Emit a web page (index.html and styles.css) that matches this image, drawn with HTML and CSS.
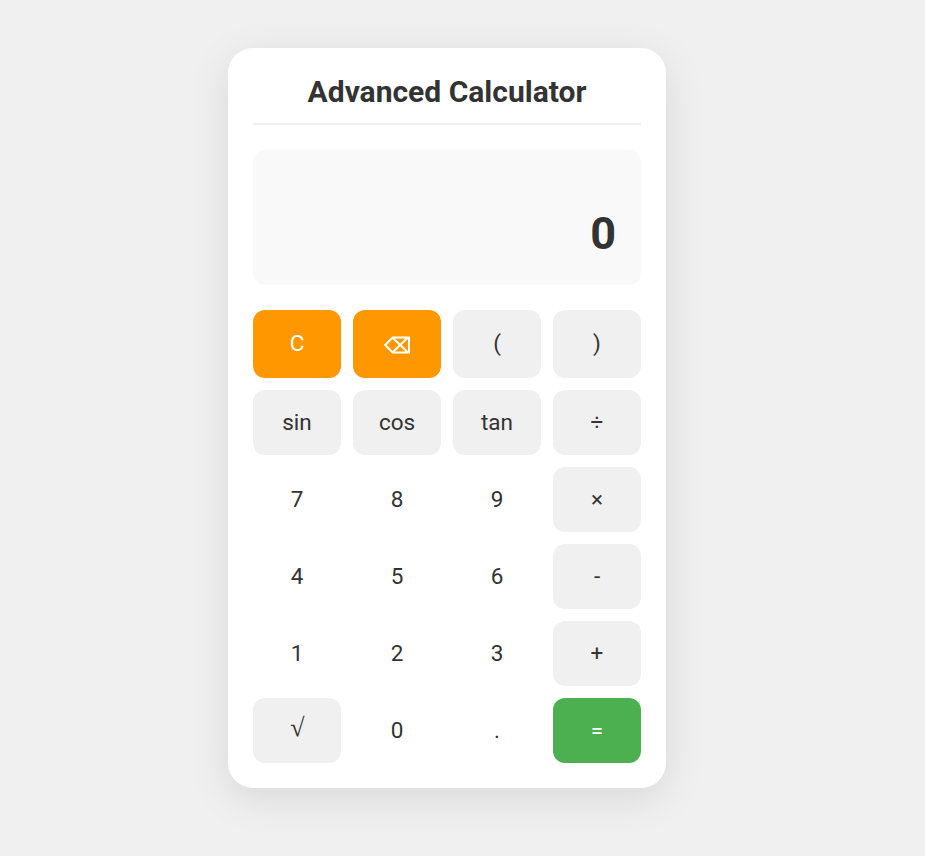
FILE: index.html
```html
<!DOCTYPE html>
<html lang="en">
<head>
<meta charset="UTF-8">
<title>Advanced Calculator</title>
<link rel="stylesheet" href="styles.css">
</head>
<body>
<main class="calculator">
  <h1 class="title">Advanced Calculator</h1>
  <div class="display"><div class="history"></div><div class="result">0</div></div>
  <div class="keys">
    <button class="key clear">C</button>
    <button class="key clear" aria-label="Backspace"><svg class="backspace" viewBox="0 0 26 18" width="26" height="18"><path d="M1.2 9 8.6 1.5H25V16.5H8.6ZM8.6 1.7 23.5 16M8.6 16.3 23.5 2"/></svg></button>
    <button class="key op">(</button>
    <button class="key op">)</button>
    <button class="key op">sin</button>
    <button class="key op">cos</button>
    <button class="key op">tan</button>
    <button class="key op">÷</button>
    <button class="key">7</button>
    <button class="key">8</button>
    <button class="key">9</button>
    <button class="key op">×</button>
    <button class="key">4</button>
    <button class="key">5</button>
    <button class="key">6</button>
    <button class="key op">-</button>
    <button class="key">1</button>
    <button class="key">2</button>
    <button class="key">3</button>
    <button class="key op">+</button>
    <button class="key op"><span class="root">√</span></button>
    <button class="key">0</button>
    <button class="key">.</button>
    <button class="key equals">=</button>
  </div>
</main>
</body>
</html>
```
FILE: styles.css
```css
* {
  box-sizing: border-box;
}

body {
  margin: 0;
  padding: 48px 0 0 228px;
  min-height: 100vh;
  background: #f0f0f0;
  font-family: Roboto, sans-serif;
  color: #333;
}

.calculator {
  width: 438px;
  height: 740px;
  padding: 25px;
  border-radius: 25px;
  background: #fff;
  box-shadow: 0 10px 40px rgba(0, 0, 0, 0.1);
}

.title {
  height: 52px;
  margin: 0 0 25px;
  border-bottom: 2px solid #f0f0f0;
  font-size: 30px;
  font-weight: 700;
  line-height: 37px;
  text-align: center;
}

.display {
  display: flex;
  flex-direction: column;
  justify-content: flex-end;
  height: 135px;
  margin-bottom: 25px;
  padding: 25px;
  border-radius: 12px;
  background: #f9f9f9;
  text-align: right;
}

.result {
  font-size: 45px;
  font-weight: 700;
  line-height: 53px;
}

.keys {
  display: grid;
  grid-template-columns: repeat(4, 88px);
  grid-template-rows: 68px repeat(5, 65px);
  gap: 12px;
}

.key {
  padding: 0 0 2px;
  border: 0;
  border-radius: 12px;
  background: #fff;
  color: #333;
  font-family: Roboto, sans-serif;
  font-size: 22.5px;
}

.op {
  background: #f0f0f0;
}

.clear {
  background: #ff9800;
  color: #fff;
}

.backspace {
  display: block;
  margin: 3px auto 0;
  fill: none;
  stroke: #fff;
  stroke-width: 2;
}

.root {
  display: block;
  padding: 0 0 3px 1px;
  font-family: "Liberation Serif", serif;
  font-size: 26px;
  line-height: 26px;
}

.equals {
  background: #4caf50;
  color: #fff;
}
```
